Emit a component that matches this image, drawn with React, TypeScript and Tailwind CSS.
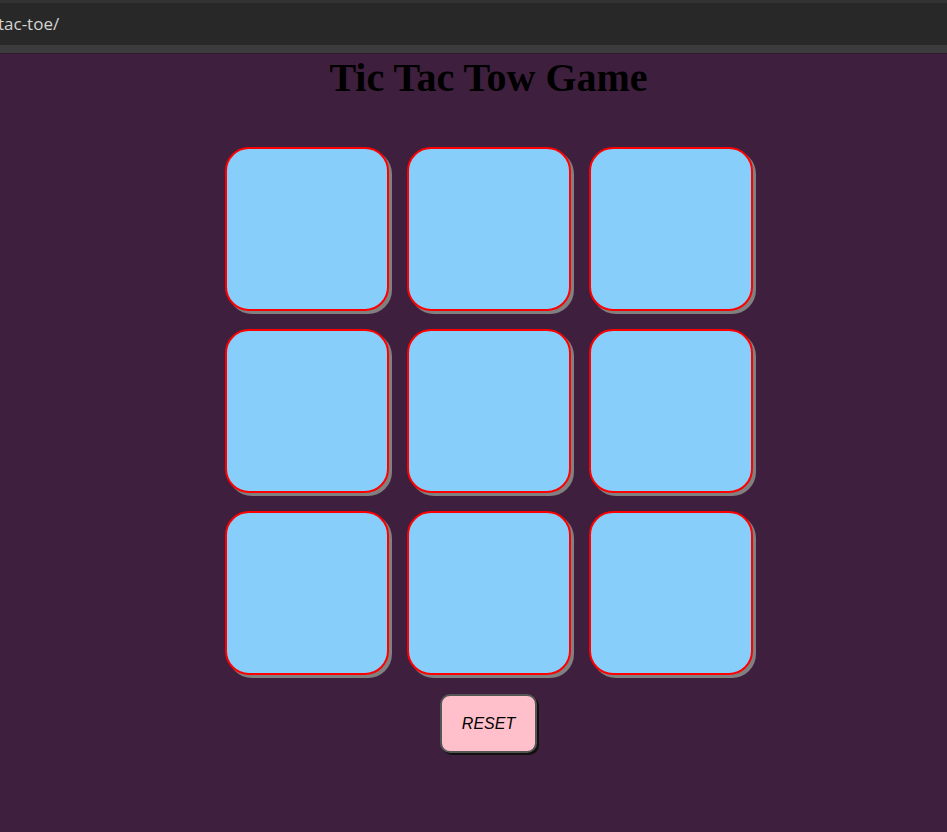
import React, { useState } from "react";

const Cell = ({ value, onClick }: { value: string; onClick: () => void }) => {
	return (
		<button
			onClick={onClick}
			className="size-[164px] rounded-[24px] border-2 border-[#ff0000] bg-[#87cefa] shadow-[3px_3px_0_#808080] text-6xl font-bold"
		>
			{value}
		</button>
	);
};

const App = () => {
	const [board, setBoard] = useState<string[]>(Array(9).fill(""));
	const [turn, setTurn] = useState("X");

	const handleClick = (index: number) => {
		if (board[index]) return;
		const next = [...board];
		next[index] = turn;
		setBoard(next);
		setTurn(turn === "X" ? "O" : "X");
	};

	const reset = () => {
		setBoard(Array(9).fill(""));
		setTurn("X");
	};

	return (
		<div className="min-h-[832px] flex flex-col bg-[#3e1f3e]">
			{/* browser bar */}
			<div className="h-[3px] bg-[#333333]" />
			<div className="h-[42px] bg-[#282828] flex items-center overflow-hidden">
				<span className="-ml-[2px] text-[17px] text-[#d4d4d4] font-['Open_Sans',sans-serif]">
					tac-toe/
				</span>
			</div>
			<div className="h-[8px] bg-[#3c3c3c]" />
			<div className="h-px bg-[#2e1a2e]" />

			<main className="flex flex-col items-center pl-[30px]">
				<h1 className="mt-[1px] text-[40px] font-bold text-black font-['Liberation_Serif',serif] leading-[46px]">
					Tic Tac Tow Game
				</h1>
				<div className="mt-[46px] grid grid-cols-3 gap-[18px]">
					{board.map((v, i) => (
						<Cell key={i} value={v} onClick={() => handleClick(i)} />
					))}
				</div>
				<button
					onClick={reset}
					className="mt-[19px] w-[97px] h-[59px] rounded-[10px] border-2 border-[#555555] bg-[#ffc0cb] shadow-[2px_2px_0_#111111] italic text-[16px] text-black font-['Liberation_Sans',Arial,sans-serif]"
				>
					RESET
				</button>
			</main>
		</div>
	);
};

export default App;
